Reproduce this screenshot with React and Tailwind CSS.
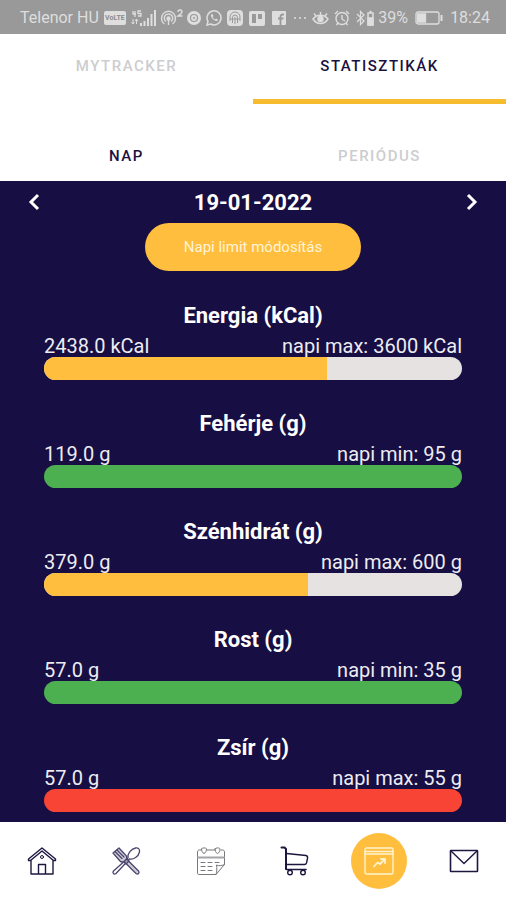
import React from "react";

const nutrients = [
  { name: "Energia (kCal)", value: "2438.0 kCal", limit: "napi max: 3600 kCal", percent: 67.7, color: "bg-[#ffbe3d]" },
  { name: "Fehérje (g)", value: "119.0 g", limit: "napi min: 95 g", percent: 100, color: "bg-[#4caf50]" },
  { name: "Szénhidrát (g)", value: "379.0 g", limit: "napi max: 600 g", percent: 63.2, color: "bg-[#ffbe3d]" },
  { name: "Rost (g)", value: "57.0 g", limit: "napi min: 35 g", percent: 100, color: "bg-[#4caf50]" },
  { name: "Zsír (g)", value: "57.0 g", limit: "napi max: 55 g", percent: 100, color: "bg-[#f74434]" },
];

function StatusBar() {
  return (
    <div className="flex h-[34px] shrink-0 items-center justify-between bg-[#999999] pt-0.5 pr-4 pl-5 text-base text-[#dedede]">
      <span className="whitespace-nowrap">Telenor HU</span>
      <span className="mx-0.5 flex h-3.5 w-[22px] items-center justify-center rounded-xs bg-[#dedede] text-[7px] font-bold text-[#8c8c8c]">VoLTE</span>
      <svg className="h-4 w-[26px]" viewBox="0 0 26 16" fill="none" stroke="currentColor">
        <path d="M2 1v3h3M4 1v6M10 1H7v2.500h3V6H7" strokeWidth="1.300" />
        <path d="M2 9v5M0.500 12L2 14l1.500-2M5.500 14V9M4 11l1.500-2L7 11" />
        <path d="M10 16v-3M13.500 16v-5M17 16V8M20.500 16V4M24 16V0" strokeWidth="2" />
      </svg>
      <svg className="h-[18px] w-6" viewBox="0 0 24 18" fill="none" stroke="currentColor" strokeWidth="1.400">
        <path d="M4.500 15A7 7 0 1 1 12.500 15M6 12.500A4.200 4.200 0 1 1 11 12.500" />
        <circle cx="8.500" cy="9.500" r="1.500" fill="currentColor" />
        <path d="M8.500 10v6M18 3c0-3 4-2.500 4 0 0 1.500-2 2.500-4 4h4.500" />
      </svg>
      <svg className="size-3.5" viewBox="0 0 14 14">
        <circle cx="7" cy="7" r="7" fill="currentColor" />
        <circle cx="7" cy="7" r="3.500" fill="none" stroke="#999999" strokeWidth="1.200" />
        <circle cx="7" cy="7" r="1" fill="#999999" />
      </svg>
      <svg className="mx-0.5 size-4" viewBox="0 0 16 16" fill="none" stroke="currentColor" strokeWidth="1.500">
        <path d="M1 15l1-3.600A7 7 0 1 1 4.700 14z" />
        <path d="M5 4.500c-1 2 3 6.800 6 6.500l1-1.300-2-1.200-1 .9C8 9 7 8 6.700 7l.8-1-.8-1.800z" fill="currentColor" stroke="none" />
      </svg>
      <svg className="size-4" viewBox="0 0 16 16">
        <rect width="16" height="16" rx="4" fill="currentColor" />
        <path d="M3 11V7a5 5 0 0 1 10 0v4M5.500 13V7.500a2.500 2.500 0 0 1 5 0V13M8 7v7M3 9h10" fill="none" stroke="#999999" />
      </svg>
      <svg className="mx-0.5 h-[15px] w-4" viewBox="0 0 16 15">
        <rect width="16" height="15" rx="2" fill="currentColor" />
        <path d="M3 3h4v9H3zM9 3h4v5H9z" fill="#999999" />
      </svg>
      <svg className="mx-0.5 size-3.5" viewBox="0 0 14 14">
        <rect width="14" height="14" rx="1" fill="currentColor" />
        <path d="M12 3.500h-1.500c-1.300 0-2 .7-2 2V14M6 7.500h5.500" fill="none" stroke="#999999" strokeWidth="1.800" />
      </svg>
      <svg className="mx-0.5 h-4 w-3.5" viewBox="0 0 14 16" fill="currentColor">
        <circle cx="2" cy="8" r="1" /><circle cx="7" cy="8" r="1" /><circle cx="12" cy="8" r="1" />
      </svg>
      <svg className="h-4 w-[17px]" viewBox="0 0 17 16" fill="none" stroke="currentColor" strokeWidth="1.500">
        <path d="M1 9c4-5 11-5 15 0-4 6-11 6-15 0zM2 3.500L4 6M8.500 2v3M15 3.500L13 6" />
        <circle cx="8.500" cy="9" r="2.500" fill="currentColor" />
      </svg>
      <svg className="mx-0.5 size-4" viewBox="0 0 16 16" fill="none" stroke="currentColor" strokeWidth="1.400">
        <circle cx="8" cy="8.500" r="6" />
        <path d="M8 5v4l3 2M1 4l3-3M15 4l-3-3M4 13l-1.500 2M12 13l1.500 2" />
      </svg>
      <svg className="h-4 w-5" viewBox="0 0 20 16" fill="none" stroke="currentColor" strokeWidth="1.300">
        <path d="M2 4l7 7-3.500 3.500v-13L9 5l-7 7M1 8h.500M10 8h.500" />
        <path d="M13 3h5v12h-5zM14.500 1.500h2" strokeWidth="1.500" />
        <path d="M13 8h5v7h-5z" fill="currentColor" />
      </svg>
      <span>39%</span>
      <svg className="mx-1 h-3.5 w-7" viewBox="0 0 28 14" fill="none" stroke="currentColor" strokeWidth="1.300">
        <rect x="1" y="1" width="23" height="12" rx="2" />
        <path d="M2.500 3h8v8h-8z" fill="currentColor" />
        <path d="M26.500 4v6" strokeWidth="2" />
      </svg>
      <span>18:24</span>
    </div>
  );
}

function Tabs() {
  return (
    <header className="shrink-0 bg-white text-[15px] font-medium tracking-widest">
      <nav className="grid h-[70px] grid-cols-2" aria-label="Nézet">
        <button className="border-b-[5px] border-transparent text-[#cdcdcf]">MYTRACKER</button>
        <button className="border-b-[5px] border-[#f6bb2f] text-[#1a1142]">STATISZTIKÁK</button>
      </nav>
      <nav className="grid h-[77px] grid-cols-2 pt-[27px]" aria-label="Időszak">
        <button className="text-[#1a1142]">NAP</button>
        <button className="text-[#cdcdcf]">PERIÓDUS</button>
      </nav>
    </header>
  );
}

function Nutrient({ name, value, limit, percent, color }) {
  return (
    <section className="pb-7">
      <h2 className="text-center text-[22px] leading-8 font-bold">{name}</h2>
      <div className="flex h-[25px] items-end justify-between text-xl leading-[22px] whitespace-nowrap text-[#ececf2]">
        <span>{value}</span>
        <span>{limit}</span>
      </div>
      <div className="h-[23px] overflow-hidden rounded-full bg-[#e7e2e2]" role="progressbar" aria-label={name} aria-valuenow={percent}>
        <div className={`h-full ${color}`} style={{ width: `${percent}%` }} />
      </div>
    </section>
  );
}

function Chevron({ d }) {
  return (
    <svg className="h-5 w-3.5" viewBox="0 0 14 20" fill="none" stroke="currentColor" strokeWidth="3">
      <path d={d} />
    </svg>
  );
}

function NavItem({ label, active, children }) {
  return (
    <button aria-label={label} className="flex items-center justify-center">
      <span className={active ? "flex size-14 items-center justify-center rounded-full bg-[#ffbe3d] text-[#fff3cf]" : "text-[#1d1740]"}>
        <svg className="size-[30px]" viewBox="0 0 30 30" fill="none" stroke="currentColor" strokeWidth="1.400" strokeLinecap="round" strokeLinejoin="round">
          {children}
        </svg>
      </span>
    </button>
  );
}

function BottomNav() {
  return (
    <nav className="grid h-[78px] shrink-0 grid-cols-6 bg-white" aria-label="Főmenü">
      <NavItem label="Kezdőlap">
        <path d="M1.500 14.500v-1.500L15 2l13.500 11v1.500h-2L15 5 3.500 14.500zM4 14.500V28h22V14.500M11.500 28V18.500h7V28" />
        <circle cx="15" cy="11" r="1.500" strokeWidth="1" />
      </NavItem>
      <NavItem label="Étkezés">
        <g strokeWidth="1.300" stroke="#4b456e">
          <path d="M17 12c-1-4 3-9 7.500-10 3-.5 4.500 1.500 4 4-1 4.500-6 8-10 7L5 27.500c-2 1.500-4-.5-2.500-2.500z" />
          <path d="M2 7l7 8c1.500 1.500 3 1 4 .5L25 27.500c2 1.500 4-.5 2.500-2.500L15.500 13c.5-1.500.5-3-1-4L8 2z" fill="#a19daf" fillOpacity="0.5" />
          <path d="M4 5.500l7 7M6 4l7 7" />
          <path d="M13 15.500l2.500-2.500 2.500 2-3 3z" fill="#a19daf" />
        </g>
      </NavItem>
      <NavItem label="Naptár">
        <g strokeWidth="1" stroke="#77777d">
          <path d="M5 4H3.500C2 4 1.500 5 1.500 6v21c0 1 .5 1.500 1.500 1.500h17l8.500-10V6c0-1-.5-2-2-2H25M11 4h8" />
          <path d="M5.500 3c0-1.500 5-1.500 5 0 0 2-1 4-2.500 4.500C6.500 7 5.500 5 5.500 3zM19 3c0-1.500 5-1.500 5 0 0 2-1 4-2.500 4.500C20 7 19 5 19 3zM20 28.500c1-3 1-6 .5-9.500 2 1 5 1 8-.5" />
          <path d="M2 11.500h26" strokeWidth="2" stroke="#a4a4a8" />
          <path d="M5 16.500h4M12 16.500h4M19 16.500h4M5 20.500h4M12 20.500h4M5 24.500h4M12 24.500h4" />
        </g>
      </NavItem>
      <NavItem label="Bevásárlás">
        <path d="M1.500 1.500h3L6 3v20" strokeWidth="2" />
        <path d="M6.500 23.500H26" strokeWidth="1.600" />
        <path d="M6.500 7.500L26 9.500q2 .5 1.500 3L26.500 17q-.5 1.500-2 1.500H6.500" />
        <circle cx="10" cy="26.500" r="2.300" />
        <circle cx="23" cy="26.500" r="2.300" />
      </NavItem>
      <NavItem label="Statisztikák" active>
        <rect x="1" y="2" width="28" height="26" rx="1.500" />
        <path d="M1 5.500h28M1 8h28" />
        <path d="M10 20.500l3.500-4 2.500 1.500 4.500-4.500M17 13h4v4" strokeWidth="1.800" />
      </NavItem>
      <NavItem label="Üzenetek">
        <rect x="1.500" y="4.500" width="27" height="21" rx="0.500" strokeWidth="1.600" />
        <path d="M2 5l13 12.500L28 5" />
      </NavItem>
    </nav>
  );
}

export default function App() {
  return (
    <div className="flex h-dvh flex-col bg-white font-[Roboto,sans-serif]">
      <StatusBar />
      <Tabs />
      <main className="min-h-0 flex-1 overflow-hidden bg-[#170e43] text-white">
        <div className="flex h-[42px] items-center justify-between px-[27px]">
          <button aria-label="Előző nap"><Chevron d="M11 3L4 10l7 7" /></button>
          <time className="text-[22px] font-bold" dateTime="2022-01-19">19-01-2022</time>
          <button aria-label="Következő nap"><Chevron d="M3 3l7 7-7 7" /></button>
        </div>
        <div className="flex justify-center pb-[29px]">
          <button className="h-12 rounded-full bg-[#ffbe3d] px-[39px] text-[15px] text-[#fff4d6]">Napi limit módosítás</button>
        </div>
        <div className="px-11">
          {nutrients.map((item) => (
            <Nutrient key={item.name} {...item} />
          ))}
        </div>
      </main>
      <BottomNav />
    </div>
  );
}
